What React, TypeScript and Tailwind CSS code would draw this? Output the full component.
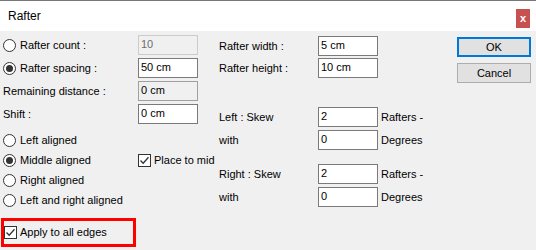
import React from "react";

const font = { fontFamily: '"Liberation Sans", Arial, sans-serif' };

function Radio({ checked }: { checked?: boolean }) {
  return (
    <span className="flex h-[13px] w-[13px] shrink-0 items-center justify-center rounded-full border border-[#333333] bg-white">
      {checked && <span className="h-[7px] w-[7px] rounded-full bg-[#333333]" />}
    </span>
  );
}

function Check() {
  return (
    <span className="flex h-[13px] w-[13px] shrink-0 items-center justify-center border border-[#333333] bg-white">
      <svg width="11" height="11" viewBox="0 0 11 11">
        <path d="M1.5 5.5 L4.2 8.3 L9.5 2.2" fill="none" stroke="#333333" strokeWidth="1.3" />
      </svg>
    </span>
  );
}

function Field({
  value,
  kind = "normal",
}: {
  value: string;
  kind?: "normal" | "disabled" | "readonly";
}) {
  const cls =
    kind === "disabled"
      ? "border-[#cccccc] bg-[#f0f0f0] text-[#6d6d6d]"
      : kind === "readonly"
      ? "border-[#a0a0a0] bg-[#f0f0f0] text-black"
      : "border-[#7a7a7a] bg-white text-black";
  return (
    <div className={`flex h-[20px] w-[60px] shrink-0 items-center border pb-[1px] pl-[2px] ${cls}`}>
      {value}
    </div>
  );
}

function RadioRow({ label, checked }: { label: string; checked?: boolean }) {
  return (
    <div className="flex w-[138px] shrink-0 items-center gap-[4px] whitespace-nowrap pl-[3px]">
      <Radio checked={checked} />
      <span>{label}</span>
    </div>
  );
}

function SkewRow({ label, value, unit, className = "" }: { label: string; value: string; unit: string; className?: string }) {
  return (
    <div className={`flex h-[20px] items-center whitespace-nowrap ${className}`}>
      <span className="w-[99px]">{label}</span>
      <Field value={value} />
      <span className="ml-[3px]">{unit}</span>
    </div>
  );
}

export default function App() {
  return (
    <div className="h-[250px] w-[536px] overflow-hidden border-t border-[#777777] bg-[#f0f0f0] text-[11px] text-black" style={font}>
      <div className="flex h-[30px] items-center justify-between bg-white pl-[8px] pr-[6px]">
        <span className="text-[12px]">Rafter</span>
        <span className="mt-[4px] flex h-[19px] w-[14px] items-center justify-center bg-[#c75050] text-[11px] font-bold leading-none text-white">
          x
        </span>
      </div>

      <div className="flex">
        {/* left column */}
        <div className="flex w-[198px] shrink-0 flex-col pt-[4px]">
          <div className="flex flex-col gap-[3px]">
            <div className="flex h-[20px] items-center">
              <RadioRow label="Rafter count :" />
              <Field value="10" kind="disabled" />
            </div>
            <div className="flex h-[20px] items-center">
              <RadioRow label="Rafter spacing :" checked />
              <Field value="50 cm" />
            </div>
            <div className="flex h-[20px] items-center">
              <span className="w-[138px] shrink-0 pl-[3px]">Remaining distance :</span>
              <Field value="0 cm" kind="readonly" />
            </div>
            <div className="flex h-[20px] items-center">
              <span className="w-[138px] shrink-0 pl-[3px]">Shift :</span>
              <Field value="0 cm" />
            </div>
          </div>

          <div className="mt-[6px] flex flex-col">
            <div className="flex h-[20px] items-center">
              <RadioRow label="Left aligned" />
            </div>
            <div className="flex h-[20px] items-center">
              <RadioRow label="Middle aligned" checked />
              <div className="flex items-center gap-[3px] whitespace-nowrap">
                <Check />
                <span>Place to mid</span>
              </div>
            </div>
            <div className="flex h-[20px] items-center">
              <RadioRow label="Right aligned" />
            </div>
            <div className="flex h-[20px] items-center">
              <RadioRow label="Left and right aligned" />
            </div>
          </div>

          <div className="ml-[1px] mt-[8px] flex h-[29px] w-[135px] items-center gap-[3px] whitespace-nowrap border-[3px] border-[#ff0000]">
            <Check />
            <span>Apply to all edges</span>
          </div>
        </div>

        {/* middle column */}
        <div className="ml-[21px] flex flex-col pt-[5px]">
          <SkewRow label="Rafter width :" value="5 cm" unit="" />
          <SkewRow label="Rafter height :" value="10 cm" unit="" className="mt-[2px]" />
          <SkewRow label="Left : Skew" value="2" unit="Rafters -" className="mt-[29px]" />
          <SkewRow label="with" value="0" unit="Degrees" className="mt-[3px]" />
          <SkewRow label="Right : Skew" value="2" unit="Rafters -" className="mt-[14px]" />
          <SkewRow label="with" value="0" unit="Degrees" className="mt-[3px]" />
        </div>

        {/* buttons */}
        <div className="ml-auto mr-[5px] flex flex-col gap-[6px] pt-[6px]">
          <button className="flex h-[20px] w-[74px] items-center justify-center border-2 border-[#0078d7] bg-[#e1e1e1]">
            OK
          </button>
          <button className="flex h-[20px] w-[74px] items-center justify-center border border-[#adadad] bg-[#e1e1e1]">
            Cancel
          </button>
        </div>
      </div>
    </div>
  );
}
